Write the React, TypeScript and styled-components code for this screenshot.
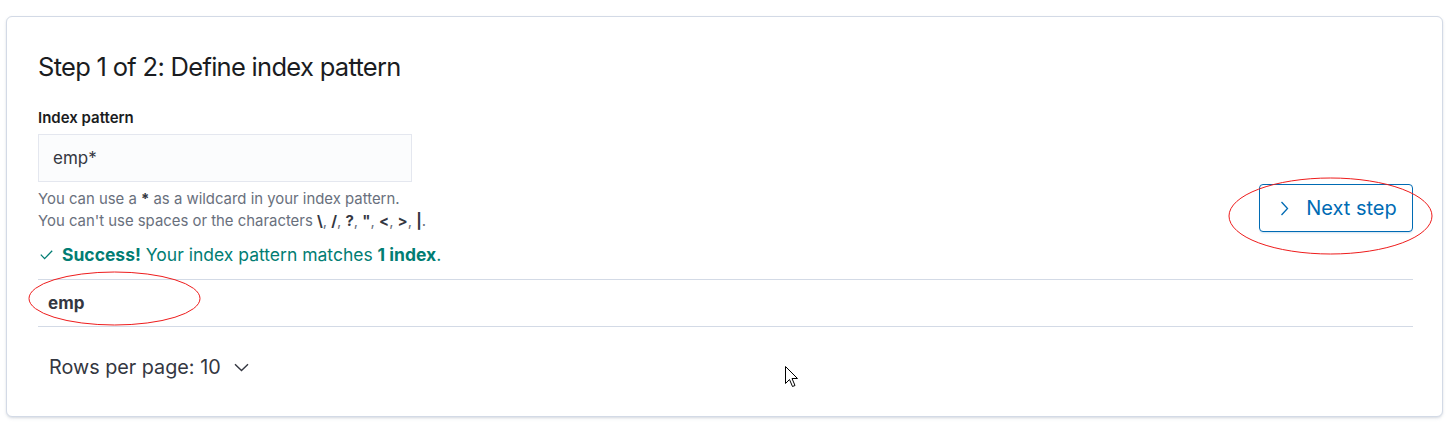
import React from "react";
import styled, { createGlobalStyle } from "styled-components";

const Global = createGlobalStyle`
  html, body { margin: 0; padding: 0; background: #ffffff; }
  body { font-family: Inter, "Noto Sans", sans-serif; -webkit-font-smoothing: antialiased; }
  * { box-sizing: border-box; }
`;

const Page = styled.div`
  position: relative;
  padding: 16px 6px 11px 6px;
`;

const Card = styled.div`
  border: 1px solid #d3dae6;
  border-radius: 6px;
  background: #fff;
  box-shadow: 0 1px 2px rgba(152, 162, 179, 0.25), 0 2px 4px -1px rgba(152, 162, 179, 0.2);
  padding: 32px 29px 38px 31px;
  height: 401px;
`;

const Title = styled.h2`
  margin: 0;
  font-size: 25.5px;
  line-height: 36px;
  font-weight: 400;
  color: #1a1c21;
  letter-spacing: -0.7px;
`;

const FormRow = styled.div`
  display: flex;
  align-items: flex-end;
  justify-content: space-between;
  margin-top: 24px;
`;

const FormCol = styled.div`
  display: flex;
  flex-direction: column;
`;

const Label = styled.label`
  font-size: 15px;
  line-height: 18px;
  font-weight: 600;
  color: #1a1c21;
`;

const Input = styled.div`
  margin-top: 7px;
  width: 374px;
  height: 48px;
  background: #fbfcfd;
  border: 1px solid #e4e7ef;
  display: flex;
  align-items: center;
  padding-left: 14px;
  font-size: 17px;
  color: #343741;
`;

const Help = styled.div`
  margin-top: 6px;
  font-size: 14.9px;
  line-height: 22px;
  color: #69707d;
  b { color: #343741; font-weight: 700; }
`;

const NextButton = styled.button`
  width: 154px;
  height: 48px;
  border: 1px solid #006bb4;
  border-radius: 4px;
  background: #fff;
  color: #006bb4;
  font-family: Inter, "Noto Sans", sans-serif;
  font-size: 20px;
  display: flex;
  align-items: center;
  justify-content: center;
  gap: 17px;
  padding: 0 0 0 5px;
  box-shadow: 0 2px 2px -1px rgba(0, 107, 180, 0.2);
  cursor: pointer;
`;

const Success = styled.div`
  margin-top: 11px;
  display: flex;
  align-items: center;
  gap: 9px;
  font-size: 17.5px;
  line-height: 24px;
  color: #017d73;
  padding-left: 2px;
  b { font-weight: 700; }
`;

const Table = styled.div`
  margin-top: 12px;
  border-top: 1px solid #d3dae6;
  border-bottom: 1px solid #d3dae6;
`;

const Cell = styled.div`
  height: 46px;
  display: flex;
  align-items: center;
  padding-left: 10px;
  font-size: 17px;
  font-weight: 700;
  color: #343741;
`;

const Pager = styled.div`
  margin-top: 28px;
  display: flex;
  align-items: center;
  gap: 13px;
  padding-left: 11px;
  font-size: 19.8px;
  line-height: 24px;
  color: #343741;
`;

const Overlay = styled.svg`
  position: absolute;
  left: 0;
  top: 0;
  pointer-events: none;
`;

export default function App() {
  return (
    <Page>
      <Global />
      <Card>
        <Title>Step 1 of 2: Define index pattern</Title>
        <FormRow>
          <FormCol>
            <Label>Index pattern</Label>
            <Input>emp*</Input>
            <Help>
              You can use a <b>*</b> as a wildcard in your index pattern.
              <br />
              You can't use spaces or the characters <b>\</b>, <b>/</b>, <b>?</b>, <b>"</b>, <b>&lt;</b>, <b>&gt;</b>, <b>|</b>.
            </Help>
          </FormCol>
          <NextButton>
            <svg width="9" height="15" viewBox="0 0 9 15">
              <path d="M1.5 1 L7.5 7.5 L1.5 14" fill="none" stroke="#006bb4" strokeWidth="1.3" />
            </svg>
            <span>Next step</span>
          </NextButton>
        </FormRow>
        <Success>
          <svg width="13" height="10" viewBox="0 0 13 10">
            <path d="M0.8 4.6 L4.6 8.6 L12.2 0.8" fill="none" stroke="#017d73" strokeWidth="1.3" />
          </svg>
          <span>
            <b>Success!</b> Your index pattern matches <b>1 index</b>.
          </span>
        </Success>
        <Table>
          <Cell>emp</Cell>
        </Table>
        <Pager>
          <span>Rows per page: 10</span>
          <svg width="15" height="9" viewBox="0 0 15 9">
            <path d="M1 1.2 L7.5 7.6 L14 1.2" fill="none" stroke="#343741" strokeWidth="1.4" />
          </svg>
        </Pager>
      </Card>
      <Overlay width="1449" height="428" viewBox="0 0 1449 428">
        <ellipse cx="1330.5" cy="216" rx="101.5" ry="38" fill="none" stroke="#ee1c1c" strokeWidth="1" />
        <ellipse cx="114.5" cy="298.5" rx="85.5" ry="26.5" fill="none" stroke="#ee1c1c" strokeWidth="1" />
        <path
          d="M785.5 366.5 L785.5 383.5 L789.5 379.5 L792.5 386.5 L795 385.5 L792 378.5 L797.5 378.5 Z"
          fill="#fff"
          stroke="#000"
          strokeWidth="1"
        />
      </Overlay>
    </Page>
  );
}
